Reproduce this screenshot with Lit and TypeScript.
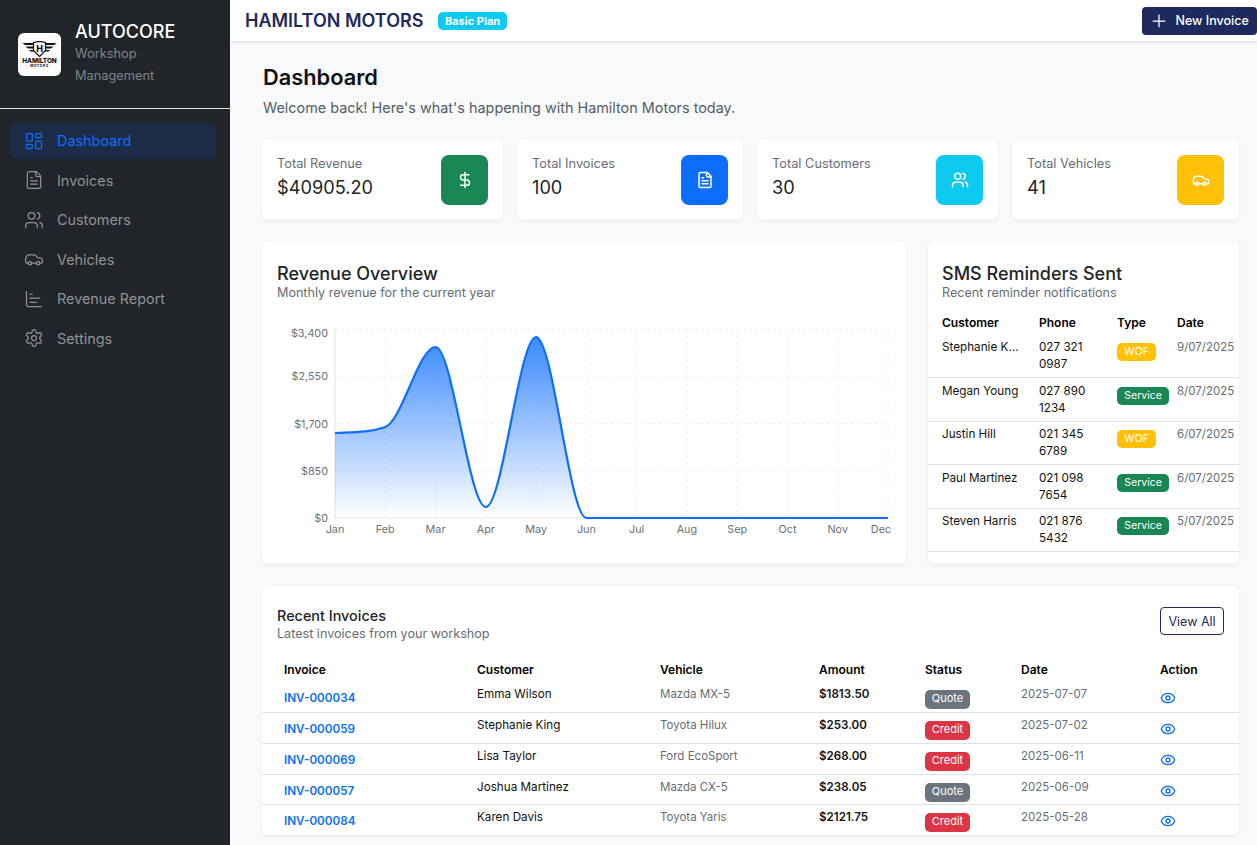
import { LitElement, css, html, svg } from 'lit';
import { customElement } from 'lit/decorators.js';

const icons = {
  dashboard: svg`<rect x="3" y="3" width="7" height="9" rx="1"/><rect x="14" y="3" width="7" height="5" rx="1"/><rect x="14" y="12" width="7" height="9" rx="1"/><rect x="3" y="16" width="7" height="5" rx="1"/>`,
  file: svg`<path d="M15 2H6a2 2 0 0 0-2 2v16a2 2 0 0 0 2 2h12a2 2 0 0 0 2-2V7Z"/><path d="M14 2v4a2 2 0 0 0 2 2h4"/><path d="M10 9H8"/><path d="M16 13H8"/><path d="M16 17H8"/>`,
  users: svg`<path d="M16 21v-2a4 4 0 0 0-4-4H6a4 4 0 0 0-4 4v2"/><circle cx="9" cy="7" r="4"/><path d="M22 21v-2a4 4 0 0 0-3-3.87"/><path d="M16 3.13a4 4 0 0 1 0 7.75"/>`,
  car: svg`<path d="M19 17h2c.6 0 1-.4 1-1v-3c0-.9-.7-1.7-1.5-1.9C18.7 10.6 16 10 16 10s-1.3-1.4-2.2-2.3c-.5-.4-1.1-.7-1.8-.7H5c-.6 0-1.1.4-1.4.9l-1.4 2.9A3.7 3.7 0 0 0 2 12v4c0 .6.4 1 1 1h2"/><circle cx="7" cy="17" r="2"/><path d="M9 17h6"/><circle cx="17" cy="17" r="2"/>`,
  chart: svg`<path d="M3 3v16a2 2 0 0 0 2 2h16"/><path d="M7 16h8"/><path d="M7 11h12"/><path d="M7 6h3"/>`,
  settings: svg`<path d="M12.22 2h-.44a2 2 0 0 0-2 2v.18a2 2 0 0 1-1 1.73l-.43.25a2 2 0 0 1-2 0l-.15-.08a2 2 0 0 0-2.73.73l-.22.38a2 2 0 0 0 .73 2.73l.15.1a2 2 0 0 1 1 1.72v.51a2 2 0 0 1-1 1.74l-.15.09a2 2 0 0 0-.73 2.73l.22.38a2 2 0 0 0 2.73.73l.15-.08a2 2 0 0 1 2 0l.43.25a2 2 0 0 1 1 1.73V20a2 2 0 0 0 2 2h.44a2 2 0 0 0 2-2v-.18a2 2 0 0 1 1-1.73l.43-.25a2 2 0 0 1 2 0l.15.08a2 2 0 0 0 2.73-.73l.22-.39a2 2 0 0 0-.73-2.73l-.15-.08a2 2 0 0 1-1-1.74v-.5a2 2 0 0 1 1-1.74l.15-.09a2 2 0 0 0 .73-2.73l-.22-.38a2 2 0 0 0-2.73-.73l-.15.08a2 2 0 0 1-2 0l-.43-.25a2 2 0 0 1-1-1.73V4a2 2 0 0 0-2-2z"/><circle cx="12" cy="12" r="3"/>`,
  dollar: svg`<line x1="12" y1="2" x2="12" y2="22"/><path d="M17 5H9.5a3.5 3.5 0 0 0 0 7h5a3.5 3.5 0 0 1 0 7H6"/>`,
  plus: svg`<path d="M5 12h14"/><path d="M12 5v14"/>`,
  eye: svg`<path d="M2.062 12.348a1 1 0 0 1 0-.696 10.75 10.75 0 0 1 19.876 0 1 1 0 0 1 0 .696 10.75 10.75 0 0 1-19.876 0"/><circle cx="12" cy="12" r="3"/>`,
};

type IconName = keyof typeof icons;

const icon = (name: IconName, size = 18, width = 2) =>
  html`<svg class="ic" width=${size} height=${size} viewBox="0 0 24 24" fill="none" stroke="currentColor" stroke-width=${width} stroke-linecap="round" stroke-linejoin="round">${icons[name]}</svg>`;

const NAV: [string, IconName][] = [
  ['Dashboard', 'dashboard'],
  ['Invoices', 'file'],
  ['Customers', 'users'],
  ['Vehicles', 'car'],
  ['Revenue Report', 'chart'],
  ['Settings', 'settings'],
];

const STATS: [string, string, IconName, string][] = [
  ['Total Revenue', '$40905.20', 'dollar', 'green'],
  ['Total Invoices', '100', 'file', 'blue'],
  ['Total Customers', '30', 'users', 'cyan'],
  ['Total Vehicles', '41', 'car', 'yellow'],
];

const SMS = [
  ['Stephanie King', '027 321 0987', 'WOF', '9/07/2025'],
  ['Megan Young', '027 890 1234', 'Service', '8/07/2025'],
  ['Justin Hill', '021 345 6789', 'WOF', '6/07/2025'],
  ['Paul Martinez', '021 098 7654', 'Service', '6/07/2025'],
  ['Steven Harris', '021 876 5432', 'Service', '5/07/2025'],
];

const INVOICES = [
  ['INV-000034', 'Emma Wilson', 'Mazda MX-5', '$1813.50', 'Quote', '2025-07-07'],
  ['INV-000059', 'Stephanie King', 'Toyota Hilux', '$253.00', 'Credit', '2025-07-02'],
  ['INV-000069', 'Lisa Taylor', 'Ford EcoSport', '$268.00', 'Credit', '2025-06-11'],
  ['INV-000057', 'Joshua Martinez', 'Mazda CX-5', '$238.05', 'Quote', '2025-06-09'],
  ['INV-000084', 'Karen Davis', 'Toyota Yaris', '$2121.75', 'Credit', '2025-05-28'],
];

// chart geometry, in svg coordinates
const PLOT = { left: 58, right: 611, top: 16, bottom: 205 };
const MONTHS = ['Jan', 'Feb', 'Mar', 'Apr', 'May', 'Jun', 'Jul', 'Aug', 'Sep', 'Oct', 'Nov', 'Dec'];
const REVENUE = [1529, 1637, 3076, 198, 3256, 0, 0, 0, 0, 0, 0, 0];
const MAX = 3400;

const xAt = (i: number) => PLOT.left + (i * (PLOT.right - PLOT.left)) / 11;
const yAt = (v: number) => PLOT.bottom - (v / MAX) * (PLOT.bottom - PLOT.top);

// monotone cubic, the way chart.js does cubicInterpolationMode: 'monotone'
function curve() {
  const pts = REVENUE.map((v, i) => ({ x: xAt(i), y: yAt(v) }));
  const n = pts.length;
  const delta = pts.slice(0, -1).map((p, i) => (pts[i + 1].y - p.y) / (pts[i + 1].x - p.x));
  const m = pts.map((_, i) => {
    if (i === 0) return delta[0];
    if (i === n - 1) return delta[n - 2];
    if (Math.sign(delta[i - 1]) !== Math.sign(delta[i])) return 0;
    return (delta[i - 1] + delta[i]) / 2;
  });
  for (let i = 0; i < n - 1; i++) {
    if (delta[i] === 0) {
      m[i] = m[i + 1] = 0;
      continue;
    }
    const a = m[i] / delta[i];
    const b = m[i + 1] / delta[i];
    const sq = a * a + b * b;
    if (sq <= 9) continue;
    const tau = 3 / Math.sqrt(sq);
    m[i] = a * tau * delta[i];
    m[i + 1] = b * tau * delta[i];
  }
  let d = `M${pts[0].x} ${pts[0].y}`;
  for (let i = 1; i < n; i++) {
    const h = (pts[i].x - pts[i - 1].x) / 3;
    d += `C${pts[i - 1].x + h} ${pts[i - 1].y + m[i - 1] * h} ${pts[i].x - h} ${pts[i].y - m[i] * h} ${pts[i].x} ${pts[i].y}`;
  }
  return d;
}

@customElement('app-root')
export class AppRoot extends LitElement {
  private logo() {
    return html`<div class="logo">
      <svg width="35" height="16" viewBox="0 0 35 16">
        <path d="M0.500 2h11l1 2H3zM3.500 5.500h9v2H6zM7 9h5.500v1.600H8.500zM34.500 2h-11l-1 2h9.500zM31.500 5.500h-9v2H29zM28 9h-5.500v1.600h4z" fill="#111"/>
        <path d="M11.500 1.500l6-1.200 6 1.200v8l-6 6-6-6z" fill="#fff" stroke="#111" stroke-width="1.200"/>
        <text x="17.500" y="10.500" text-anchor="middle" class="logo-h">H</text>
      </svg>
      <span class="logo-name">HAMILTON</span>
      <span class="logo-sub">MOTORS</span>
    </div>`;
  }

  private sidebar() {
    return html`<aside class="sidebar">
      <div class="brand">
        ${this.logo()}
        <div>
          <div class="brand-name">AUTOCORE</div>
          <div class="brand-sub">Workshop Management</div>
        </div>
      </div>
      <nav class="nav">
        ${NAV.map(
          ([label, ic], i) => html`<a class="nav-item ${i === 0 ? 'active' : ''}">${icon(ic, 20, 1.5)}<span>${label}</span></a>`
        )}
      </nav>
    </aside>`;
  }

  private chart() {
    const d = curve();
    const area = `${d}L${PLOT.right} ${PLOT.bottom}L${PLOT.left} ${PLOT.bottom}Z`;
    const ticks = [0, 850, 1700, 2550, 3400];
    return html`<svg class="chart" width="614" height="226" viewBox="0 0 614 226">
      <defs>
        <linearGradient id="rev" gradientUnits="userSpaceOnUse" x1="0" y1=${PLOT.top} x2="0" y2=${PLOT.bottom}>
          <stop offset="0" stop-color="#0d6efd" stop-opacity="0.85"/>
          <stop offset="1" stop-color="#0d6efd" stop-opacity="0"/>
        </linearGradient>
      </defs>
      ${MONTHS.map((_, i) => i === 0 ? '' : svg`<line x1=${xAt(i)} x2=${xAt(i)} y1=${PLOT.top} y2=${PLOT.bottom} class="grid"/>`)}
      ${ticks.map((t) => t === 0 ? '' : svg`<line x1=${PLOT.left} x2=${PLOT.right} y1=${yAt(t)} y2=${yAt(t)} class="grid"/>`)}
      <line x1=${PLOT.left} x2=${PLOT.left} y1=${PLOT.top} y2=${PLOT.bottom} class="axis"/>
      <line x1=${PLOT.left} x2=${PLOT.right} y1=${PLOT.bottom} y2=${PLOT.bottom} class="axis"/>
      <path d=${area} fill="url(#rev)"/>
      <path d=${d} fill="none" stroke="#0d6efd" stroke-width="2.200"/>
      ${ticks.map((t) => svg`<text x=${PLOT.left - 7} y=${yAt(t) + (t === MAX ? 8 : 4)} text-anchor="end" class="tick">$${t.toLocaleString('en-US')}</text>`)}
      ${MONTHS.map((m, i) => svg`<text x=${i === 11 ? xAt(i) - 7 : xAt(i)} y=${PLOT.bottom + 15} text-anchor="middle" class="tick">${m}</text>`)}
    </svg>`;
  }

  protected render() {
    return html`${this.sidebar()}
      <div class="page">
        <header class="topbar">
          <div class="shop">
            <span class="shop-name">HAMILTON MOTORS</span>
            <span class="plan">Basic Plan</span>
          </div>
          <button class="new-btn">${icon('plus', 20, 1.5)}<span>New Invoice</span></button>
        </header>
        <main class="content">
          <h1>Dashboard</h1>
          <p class="lead">Welcome back! Here's what's happening with Hamilton Motors today.</p>

          <section class="stats">
            ${STATS.map(
              ([label, value, ic, tone]) => html`<div class="card stat">
                <div class="stat-text">
                  <div class="stat-label">${label}</div>
                  <div class="stat-value">${value}</div>
                </div>
                <div class="stat-icon ${tone}">${icon(ic, 18, 2)}</div>
              </div>`
            )}
          </section>

          <section class="mid">
            <div class="card chart-card">
              <h2>Revenue Overview</h2>
              <div class="sub">Monthly revenue for the current year</div>
              ${this.chart()}
            </div>
            <div class="card sms-card">
              <div class="sms-head">
                <h2>SMS Reminders Sent</h2>
                <div class="sub">Recent reminder notifications</div>
              </div>
              <table class="sms">
                <colgroup><col style="width:104px"/><col style="width:78px"/><col style="width:60px"/><col/></colgroup>
                <thead><tr><th>Customer</th><th>Phone</th><th>Type</th><th>Date</th></tr></thead>
                <tbody>
                  ${SMS.map(
                    ([name, phone, type, date]) => html`<tr>
                      <td><div class="ellipsis">${name}</div></td>
                      <td>${phone}</td>
                      <td><span class="badge ${type === 'WOF' ? 'yellow' : 'green'}">${type}</span></td>
                      <td class="muted">${date}</td>
                    </tr>`
                  )}
                </tbody>
              </table>
            </div>
          </section>

          <section class="card recent">
            <div class="recent-head">
              <div>
                <h3>Recent Invoices</h3>
                <div class="sub">Latest invoices from your workshop</div>
              </div>
              <button class="view-all">View All</button>
            </div>
            <table class="inv">
              <colgroup>
                <col style="width:208px"/><col style="width:183px"/><col style="width:159px"/><col style="width:106px"/><col style="width:96px"/><col style="width:139px"/><col/>
              </colgroup>
              <thead><tr><th>Invoice</th><th>Customer</th><th>Vehicle</th><th>Amount</th><th>Status</th><th>Date</th><th>Action</th></tr></thead>
              <tbody>
                ${INVOICES.map(
                  ([id, name, car, amount, status, date]) => html`<tr>
                    <td class="low"><a class="inv-id">${id}</a></td>
                    <td>${name}</td>
                    <td class="muted">${car}</td>
                    <td class="amount">${amount}</td>
                    <td class="low"><span class="badge ${status === 'Quote' ? 'gray' : 'red'}">${status}</span></td>
                    <td class="muted">${date}</td>
                    <td class="low eye">${icon('eye', 16, 2)}</td>
                  </tr>`
                )}
              </tbody>
            </table>
          </section>
        </main>
      </div>`;
  }

  static styles = css`
    :host {
      display: flex;
      width: 1257px;
      height: 845px;
      overflow: hidden;
      font-family: Inter, 'Liberation Sans', sans-serif;
      color: #212529;
      background: #f8f9fa;
    }

    .ic {
      display: block;
      flex: none;
    }

    .sidebar {
      width: 230px;
      flex: none;
      background: #212529;
    }

    .brand {
      height: 109px;
      box-sizing: border-box;
      border-bottom: 1px solid #e4e5e6;
      display: flex;
      align-items: center;
      gap: 14px;
      padding: 0 18px;
    }

    .logo {
      width: 43px;
      height: 43px;
      flex: none;
      border-radius: 6px;
      background: #fdfcfa;
      display: flex;
      flex-direction: column;
      align-items: center;
      color: #111;
      padding-top: 8px;
      box-sizing: border-box;
    }

    .logo-h {
      font: 800 9px Inter, sans-serif;
      fill: #111;
    }

    .logo-name {
      font: 800 6.400px/6px Inter, sans-serif;
      margin-top: 1px;
    }

    .logo-sub {
      font: 700 3.400px/4px Inter, sans-serif;
      letter-spacing: 0.6px;
    }

    .brand-name {
      color: #fff;
      font-size: 18px;
      font-weight: 500;
      line-height: 22px;
    }

    .brand-sub {
      color: #7d8389;
      font-size: 12.800px;
      line-height: 22px;
    }

    .nav {
      display: flex;
      flex-direction: column;
      gap: 3.500px;
      padding: 13.800px 14px 0 10px;
    }

    .nav-item {
      height: 36px;
      display: flex;
      align-items: center;
      gap: 13px;
      padding-left: 14px;
      border-radius: 6px;
      color: #909294;
      font-size: 14.400px;
    }

    .nav-item.active {
      background: #1d2c46;
      color: #0d6efd;
    }

    .page {
      flex: 1;
      min-width: 0;
      display: flex;
      flex-direction: column;
    }

    .topbar {
      height: 41px;
      flex: none;
      box-sizing: border-box;
      background: #fff;
      box-shadow: 0 1px 3px rgba(0, 0, 0, 0.14);
      display: flex;
      align-items: center;
      justify-content: space-between;
      padding-left: 15px;
      position: relative;
    }

    .shop {
      display: flex;
      align-items: center;
      gap: 14.500px;
    }

    .shop-name {
      color: #1e2a5e;
      font-size: 18px;
      font-weight: 600;
    }

    .plan {
      background: #0dcaf0;
      color: #fff;
      font-size: 11px;
      font-weight: 700;
      line-height: 18px;
      padding: 0 7px;
      border-radius: 5px;
    }

    .new-btn {
      height: 28px;
      width: 115px;
      border: none;
      border-radius: 4px;
      background: #1e2a5e;
      color: #fff;
      font: 500 12.500px Inter, sans-serif;
      display: flex;
      align-items: center;
      gap: 6.500px;
      padding: 0 0 0 7px;
    }

    .content {
      padding: 22px 18px 0 32px;
    }

    h1 {
      margin: 0;
      font-size: 21.800px;
      font-weight: 600;
      line-height: 28px;
      color: #111;
      padding-left: 1px;
    }

    .lead {
      margin: 6px 0 0 1px;
      font-size: 14.400px;
      line-height: 22px;
      color: #555d66;
    }

    .card {
      background: #fff;
      border-radius: 6px;
      box-shadow: 0 1px 3px rgba(0, 0, 0, 0.08);
    }

    .stats {
      margin-top: 21px;
      display: grid;
      grid-template-columns: 241px 226px 241px 227px;
      gap: 14px;
    }

    .stat {
      height: 80px;
      box-sizing: border-box;
      padding: 0 15px;
      display: flex;
      align-items: center;
      justify-content: space-between;
    }

    .stat-text {
      padding-bottom: 5px;
    }

    .stat-label {
      font-size: 12.800px;
      line-height: 17px;
      color: #666d75;
    }

    .stat-value {
      font-size: 18.200px;
      line-height: 25px;
      margin-top: 3px;
      color: #212529;
    }

    .stat-icon {
      width: 47px;
      height: 50px;
      border-radius: 8px;
      color: #fff;
      display: flex;
      align-items: center;
      justify-content: center;
    }

    .green {
      background: #198754;
    }
    .blue {
      background: #0d6efd;
    }
    .cyan {
      background: #0dcaf0;
    }
    .yellow {
      background: #ffc107;
    }
    .gray {
      background: #6c757d;
    }
    .red {
      background: #dc3545;
    }

    .mid {
      margin-top: 21px;
      display: grid;
      grid-template-columns: 644px 311px;
      gap: 22px;
    }

    .chart-card,
    .sms-card {
      height: 323px;
      box-sizing: border-box;
      overflow: hidden;
    }

    .chart-card {
      padding: 22px 15px 0;
    }

    .sms-head {
      padding: 22px 14px 0;
    }

    h2 {
      margin: 0;
      font-size: 18px;
      font-weight: 500;
      line-height: 22px;
      color: #212529;
    }

    .sub {
      font-size: 12.600px;
      line-height: 16px;
      color: #666d75;
    }

    .chart {
      display: block;
      margin-top: 12px;
    }

    .grid {
      stroke: #f0f0f0;
      stroke-width: 1;
      stroke-dasharray: 3 3;
    }

    .axis {
      stroke: #e3e3e3;
      stroke-width: 1;
    }

    .tick {
      font: 10.800px Inter, sans-serif;
      fill: #6b7076;
    }

    table {
      border-collapse: collapse;
      table-layout: fixed;
      width: 100%;
      font-size: 11.700px;
      color: #111;
    }

    th {
      text-align: left;
      font-size: 12px;
      font-weight: 600;
      color: #000;
      padding: 0 7px;
    }

    .sms {
      margin-top: 8.600px;
    }

    .sms th {
      height: 25px;
    }

    .sms td:first-child,
    .sms th:first-child {
      padding-left: 14px;
    }

    .sms td:first-child {
      padding-right: 13px;
    }

    .sms td {
      padding: 4.600px 7px 3.400px;
      line-height: 17.250px;
      vertical-align: top;
      border-bottom: 1px solid #dee2e6;
    }

    .sms .badge {
      margin-top: 4px;
      padding: 0 7.300px;
    }

    .sms .muted {
      font-size: 11.500px;
    }

    .ellipsis {
      overflow: hidden;
      text-overflow: ellipsis;
      white-space: nowrap;
    }

    .muted {
      color: #666d75;
    }

    .badge {
      display: inline-block;
      box-sizing: border-box;
      height: 18px;
      line-height: 17px;
      font-size: 10.500px;
      font-weight: 400;
      color: #fff;
      padding: 0 7px;
      border-radius: 5px;
      white-space: nowrap;
      vertical-align: top;
    }

    .recent {
      margin-top: 22px;
      height: 249px;
      overflow: hidden;
    }

    .recent-head {
      display: flex;
      justify-content: space-between;
      align-items: flex-start;
      padding: 20px 15px 0;
    }

    h3 {
      margin: 0;
      font-size: 14.400px;
      font-weight: 500;
      line-height: 20px;
      color: #212529;
    }

    .view-all {
      height: 28px;
      width: 64px;
      margin-top: 1px;
      background: #fff;
      border: 1px solid #1e2a5e;
      border-radius: 4px;
      color: #1e2a5e;
      font: 12.500px Inter, sans-serif;
      padding: 0;
    }

    .inv {
      margin-top: 15px;
    }

    .inv th {
      height: 24.800px;
    }

    .inv th:first-child,
    .inv td:first-child {
      padding-left: 22px;
    }

    .inv td {
      height: 30.800px;
      box-sizing: border-box;
      padding: 4px 7px 0;
      line-height: 17px;
      vertical-align: top;
      border-bottom: 1px solid #dee2e6;
    }

    .inv td.low {
      padding-top: 8px;
    }

    .inv .muted {
      font-size: 11.500px;
    }

    .inv .badge {
      font-size: 11px;
      height: 19px;
      line-height: 17px;
      width: 45px;
      padding: 0;
      text-align: center;
    }

    .inv-id {
      color: #0d6efd;
      font-weight: 600;
      font-size: 11.700px;
    }

    .amount {
      font-weight: 600;
      font-size: 11.600px;
    }

    .eye {
      color: #0d6efd;
    }
  `;
}

declare global {
  interface HTMLElementTagNameMap {
    'app-root': AppRoot;
  }
}
